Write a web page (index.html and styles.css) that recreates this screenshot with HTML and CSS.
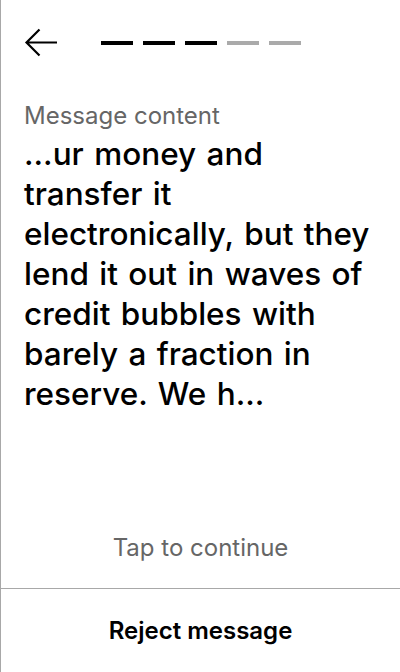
FILE: index.html
```html
<!DOCTYPE html>
<html>
<head>
<meta charset="utf-8">
<link rel="stylesheet" href="styles.css">
</head>
<body>
<div class="screen">
  <header class="top">
    <svg class="back" width="34" height="30" viewBox="0 0 34 30">
      <path d="M33 14.5 H2.5 M15.5 1.5 L2.5 14.5 L15.5 27.5" fill="none" stroke="#000" stroke-width="2.2"/>
    </svg>
    <div class="steps">
      <span class="step on"></span>
      <span class="step on"></span>
      <span class="step on"></span>
      <span class="step"></span>
      <span class="step"></span>
    </div>
  </header>
  <main class="content">
    <div class="label">Message content</div>
    <div class="message">...ur money and transfer it electronically, but they lend it out in waves of credit bubbles with barely a fraction in reserve. We h...</div>
  </main>
  <div class="tap">Tap to continue</div>
  <footer class="bottom">Reject message</footer>
</div>
</body>
</html>
```

FILE: styles.css
```css
html, body {
  margin: 0;
  padding: 0;
  background: #fff;
}
.screen {
  box-sizing: border-box;
  width: 400px;
  height: 672px;
  border-left: 1px solid #a8a8a8;
  display: flex;
  flex-direction: column;
  font-family: Inter, "Noto Sans", sans-serif;
  color: #000;
}
.top {
  display: flex;
  align-items: center;
  height: 86px;
  padding-left: 23px;
}
.back {
  display: block;
}
.steps {
  display: flex;
  gap: 10px;
  margin-left: 43px;
}
.step {
  width: 32px;
  height: 4px;
  background: #aaaaaa;
}
.step.on {
  background: #000;
}
.content {
  flex: 1;
  padding: 15px 20px 0 23px;
}
.label {
  font-size: 24px;
  line-height: 30px;
  color: #666;
}
.message {
  font-size: 31.5px;
  line-height: 40px;
  font-weight: 500;
  word-spacing: 2px;
  margin-top: 3px;
}
.tap {
  text-align: center;
  font-size: 24px;
  line-height: 28px;
  color: #666;
  padding-bottom: 26px;
}
.bottom {
  border-top: 1px solid #a8a8a8;
  height: 83px;
  display: flex;
  align-items: center;
  justify-content: center;
  font-size: 24px;
  font-weight: 600;
}
```
